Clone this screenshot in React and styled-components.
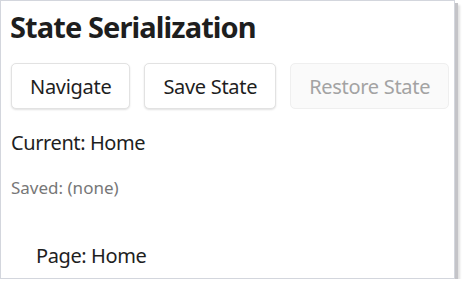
import React from "react";
import styled, { createGlobalStyle } from "styled-components";

const Global = createGlobalStyle`
  html, body { margin: 0; padding: 0; background: #ffffff; }
  body { font-family: "Noto Sans", "Open Sans", sans-serif; color: #1f1f1f; }
`;

const Window = styled.div`
  box-sizing: border-box;
  width: 455px;
  height: 279px;
  background: #ffffff;
  border: 1px solid #d3d6dd;
  box-shadow: 3px 3px 0 #c4c4c8, 5px 5px 2px rgba(0, 0, 0, 0.12);
  padding: 6px 9px 0 9px;
  display: flex;
  flex-direction: column;
`;

const Title = styled.h1`
  margin: 0;
  font-size: 29px;
  font-weight: 700;
  line-height: 40px;
  letter-spacing: -0.9px;
  color: #1e1e1e;
`;

const Toolbar = styled.div`
  display: flex;
  gap: 14px;
  margin-top: 16px;
  padding-left: 1px;
`;

const Button = styled.button`
  box-sizing: border-box;
  flex: 0 0 auto;
  white-space: nowrap;
  height: 46px;
  padding: 0 18px;
  border-radius: 5px;
  font-family: inherit;
  font-size: 20px;
  letter-spacing: -0.3px;
  border: 1px solid ${(p) => (p.disabled ? "#efefef" : "#e2e2e2")};
  background: ${(p) => (p.disabled ? "#fafafa" : "#ffffff")};
  color: ${(p) => (p.disabled ? "#a3a3a3" : "#1e1e1e")};
  box-shadow: ${(p) => (p.disabled ? "none" : "0 1px 2px rgba(0,0,0,0.12)")};
`;

const Line = styled.div`
  font-size: ${(p) => (p.small ? "17px" : "20px")};
  color: ${(p) => (p.small ? "#777777" : "#1e1e1e")};
  line-height: ${(p) => (p.small ? "22px" : "28px")};
  letter-spacing: ${(p) => (p.small ? "0" : "-0.4px")};
  margin-top: ${(p) => p.top}px;
  padding-left: ${(p) => p.indent || 1}px;
`;

export default function App() {
  return (
    <>
      <Global />
      <Window>
        <Title>State Serialization</Title>
        <Toolbar>
          <Button>Navigate</Button>
          <Button>Save State</Button>
          <Button disabled>Restore State</Button>
        </Toolbar>
        <Line top={20}>Current: Home</Line>
        <Line small top={20}>Saved: (none)</Line>
        <Line top={43} indent={26}>Page: Home</Line>
      </Window>
    </>
  );
}
